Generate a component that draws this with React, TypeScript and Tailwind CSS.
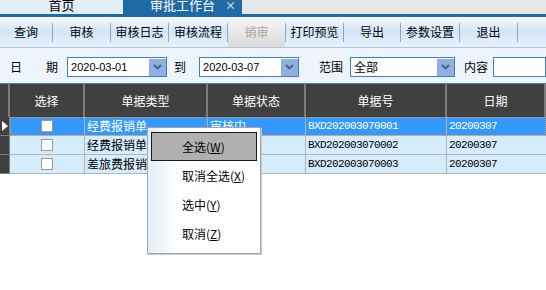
import React from 'react';

const cols = 'grid grid-cols-[10px_75px_123px_98px_141px_1fr]';

const rows = [
  { type: '经费报销单', status: '审核中', no: 'BXD202003070001', date: '20200307' },
  { type: '经费报销单', status: '审核中', no: 'BXD202003070002', date: '20200307' },
  { type: '差旅费报销单', status: '审核中', no: 'BXD202003070003', date: '20200307' },
];

const tools = [
  { label: '查询', w: 'w-[53px]' },
  { label: '审核', w: 'w-[58px]' },
  { label: '审核日志', w: 'w-[58px]' },
  { label: '审核流程', w: 'w-[59px]' },
  { label: '销审', w: 'w-[58px]', disabled: true },
  { label: '打印预览', w: 'w-[58px]' },
  { label: '导出', w: 'w-[57px]' },
  { label: '参数设置', w: 'w-[59px]' },
  { label: '退出', w: 'w-[58px]' },
];

function DropBtn() {
  return (
    <div className="flex h-[17px] w-[17px] items-center justify-center bg-[#8fb0e2]">
      <svg width="9" height="6" viewBox="0 0 9 6">
        <path d="M1 1 L4.5 4.5 L8 1" stroke="#4b5f80" strokeWidth="1.8" fill="none" />
      </svg>
    </div>
  );
}

function MenuItem({ text, k, active }: { text: string; k: string; active?: boolean }) {
  return (
    <div
      className={
        'flex h-[29px] items-center pl-[30px] ' +
        (active ? 'border border-[#1a1a1a] bg-[#b0b0b0]' : 'border border-transparent')
      }
    >
      <span>
        {text}(<span className="underline">{k}</span>)
      </span>
    </div>
  );
}

export default function App() {
  return (
    <div className="relative h-[290px] w-[546px] overflow-hidden bg-white font-['Noto_Sans_CJK_SC',sans-serif] text-[12px] text-black">
      {/* tabs */}
      <div className="flex h-[14px] bg-[#e7e7e7]">
        <div className="flex h-[14px] w-[123px] items-end justify-center overflow-hidden bg-[#e3edf7] pb-[3px]">
          <span className="text-[13px] leading-[13px]">首页</span>
        </div>
        <div className="relative flex h-[14px] w-[119px] items-end justify-center overflow-hidden bg-[#1e6aa6] pb-[3px] text-white">
          <span className="text-[13px] leading-[13px]">审批工作台</span>
          <span className="absolute right-[6px] bottom-[3px] text-[11px] leading-[11px]">×</span>
        </div>
      </div>
      <div className="h-[3px] bg-[#1e6aa6]" />

      {/* toolbar */}
      <div className="flex h-[31px] border-b border-[#a9c6e3] bg-gradient-to-b from-[#f6f9fd] via-[#d3e5f6] to-[#e9f2fb]">
        {tools.map((t) => (
          <div key={t.label} className={'flex items-center ' + t.w}>
            <div
              className={
                'flex h-full flex-1 items-center justify-center ' +
                (t.disabled ? 'bg-gradient-to-b from-[#f6f6f6] to-[#d9d9d9] text-[#a5a5a5]' : '')
              }
            >
              {t.label}
            </div>
            <div className="h-[19px] w-px bg-[#8ea7c2]" />
          </div>
        ))}
      </div>

      {/* filter row */}
      <div className="flex h-[36px] items-center border-b border-[#3d7dc2] bg-[#edf4fc] pt-[3px]">
        <span className="ml-[10px]">日</span>
        <span className="ml-[24px]">期</span>
        <div className="ml-[9px] flex h-[20px] w-[100px] items-center justify-between border border-[#3c80c9] bg-white pl-[3px] font-['Liberation_Sans',sans-serif] text-[11px]">
          <span>2020-03-01</span>
          <DropBtn />
        </div>
        <span className="ml-[7px]">到</span>
        <div className="ml-[13px] flex h-[20px] w-[100px] items-center justify-between border border-[#3c80c9] bg-white pl-[3px] font-['Liberation_Sans',sans-serif] text-[11px]">
          <span>2020-03-07</span>
          <DropBtn />
        </div>
        <span className="ml-[20px]">范围</span>
        <div className="ml-[7px] flex h-[20px] w-[105px] items-center justify-between border border-[#3c80c9] bg-white pl-[3px]">
          <span>全部</span>
          <DropBtn />
        </div>
        <span className="ml-[9px]">内容</span>
        <div className="ml-[5px] h-[20px] flex-1 border border-[#3c80c9] bg-white" />
      </div>

      {/* grid header */}
      <div className={cols + ' h-[33px] bg-[#404040] text-white'}>
        <div className="border-r-2 border-[#7c7c7c]" />
        {['选择', '单据类型', '单据状态', '单据号', '日期'].map((h) => (
          <div key={h} className="flex items-center justify-center border-r-2 border-[#7c7c7c]">
            {h}
          </div>
        ))}
      </div>

      {/* rows */}
      {rows.map((r, i) => {
        const sel = i === 0;
        return (
          <div key={r.no} className={cols + ' h-[19px]'}>
            <div className="flex items-center border-r border-b border-[#7c7c7c] bg-[#404040] pl-[2px]">
              {sel && (
                <svg width="6" height="10" viewBox="0 0 6 10">
                  <path d="M0 0 L6 5 L0 10 Z" fill="#fff" />
                </svg>
              )}
            </div>
            <div
              className={
                'col-span-5 grid grid-cols-[75px_123px_98px_141px_1fr] ' +
                (sel ? 'bg-[#3399ff] text-white outline outline-1 outline-dotted outline-[#e59a4a] -outline-offset-1' : 'bg-[#d5ecfc]')
              }
            >
              <div className="flex items-center justify-center border-r border-b border-[#b5b5b5]">
                <div className="h-[12px] w-[12px] border border-[#9a9a9a] bg-white" />
              </div>
              <div className="flex items-center overflow-hidden whitespace-nowrap border-r border-b border-[#b5b5b5] pl-[2px]">
                {r.type}
              </div>
              <div className="flex items-center overflow-hidden whitespace-nowrap border-r border-b border-[#b5b5b5] pl-[2px]">
                {r.status}
              </div>
              <div className="flex items-center border-r border-b border-[#b5b5b5] pl-[2px] font-['Liberation_Mono',monospace] text-[11px] tracking-[-0.6px]">
                {r.no}
              </div>
              <div className="flex items-center border-b border-[#b5b5b5] pl-[2px] font-['Liberation_Mono',monospace] text-[11px] tracking-[-0.6px]">
                {r.date}
              </div>
            </div>
          </div>
        );
      })}

      {/* context menu */}
      <div className="absolute left-[147px] top-[127px] w-[114px] border border-[#a6a6a6] bg-gradient-to-r from-[#e1edf9] via-white via-[25%] to-white px-[3px] pt-[4px] pb-[5px] shadow-[1px_1px_0_#c8c8c8]">
        <MenuItem text="全选" k="W" active />
        <MenuItem text="取消全选" k="X" />
        <MenuItem text="选中" k="Y" />
        <MenuItem text="取消" k="Z" />
      </div>
    </div>
  );
}
